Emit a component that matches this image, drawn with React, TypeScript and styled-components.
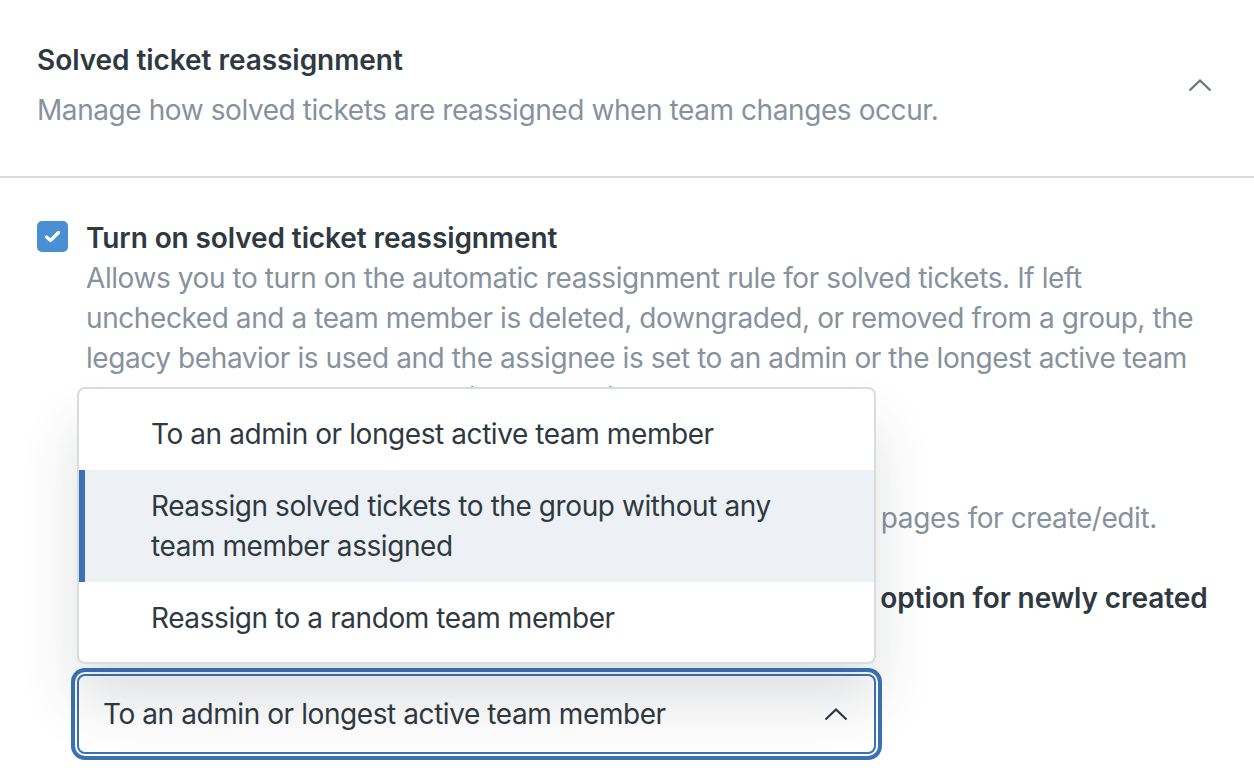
import React from "react";
import styled, { createGlobalStyle } from "styled-components";

const GlobalStyle = createGlobalStyle`
  html, body {
    margin: 0;
    padding: 0;
    background: #ffffff;
  }
  body {
    font-family: Inter, "Noto Sans", sans-serif;
    font-size: 28px;
    line-height: 40px;
    letter-spacing: -0.42px;
    color: #2f3941;
    -webkit-font-smoothing: antialiased;
  }
  * {
    box-sizing: border-box;
  }
`;

const Page = styled.div`
  width: 1254px;
  height: 782px;
  overflow: hidden;
`;

const Header = styled.div`
  display: flex;
  align-items: center;
  justify-content: space-between;
  padding: 40px 42px 46px 37px;
  border-bottom: 2px solid #d8dcde;
`;

const HeaderText = styled.div`
  display: flex;
  flex-direction: column;
  gap: 10px;
`;

const Title = styled.h2`
  margin: 0;
  font-size: 28px;
  line-height: 40px;
  font-weight: 600;
  letter-spacing: -0.05px;
  color: #2f3941;
`;

const Subtitle = styled.p`
  margin: 0;
  color: #87929d;
`;

const Chevron = styled.svg<{ tone: string }>`
  width: 24px;
  height: 14px;
  flex: none;
  color: ${(p) => p.tone};
`;

const Body = styled.div`
  padding: 40px 40px 0 37px;
  display: flex;
  flex-direction: column;
`;

const CheckRow = styled.div`
  display: flex;
  align-items: flex-start;
  gap: 18px;
`;

const Box = styled.span`
  width: 31px;
  height: 31px;
  margin-top: 3px;
  flex: none;
  border-radius: 5px;
  background: #4a8fd4;
  display: flex;
  align-items: center;
  justify-content: center;
`;

const CheckText = styled.div`
  display: flex;
  flex-direction: column;
`;

const Label = styled.div`
  font-weight: 600;
  letter-spacing: -0.1px;
  color: #2f3941;
`;

const Hint = styled.div`
  color: #87929d;
`;

const Link = styled.a`
  color: #1f73b7;
  text-decoration: none;
  svg {
    margin-left: 6px;
    vertical-align: -2px;
  }
`;

const Field = styled.div<{ top: number }>`
  margin: ${(p) => p.top}px 0 0 48px;
  display: flex;
  flex-direction: column;
`;

const SelectWrap = styled.div`
  position: relative;
  margin: 16px 0 0 40px;
  width: 799px;
`;

const Menu = styled.ul`
  position: absolute;
  left: 0;
  right: 0;
  bottom: calc(100% + 10px);
  z-index: 10;
  margin: 0;
  padding: 9px 0 8px;
  list-style: none;
  background: #ffffff;
  border: 2px solid #d8dcde;
  border-radius: 8px;
  box-shadow: 0 40px 56px 0 rgba(47, 57, 65, 0.15);
`;

const Item = styled.li<{ active?: boolean }>`
  padding: 16px 40px 16px 72px;
  color: #2f3941;
  background: ${(p) => (p.active ? "#edf1f6" : "transparent")};
  box-shadow: ${(p) => (p.active ? "inset 6px 0 0 #3a72b5" : "none")};
`;

const SelectBox = styled.div`
  display: flex;
  align-items: center;
  justify-content: space-between;
  height: 80px;
  padding: 0 26px 0 24px;
  border: 2px solid #3a72b5;
  border-radius: 8px;
  background: #ffffff;
  box-shadow: 0 0 0 2px #ffffff, 0 0 0 6px #3a72b5;
  color: #2f3941;
`;

const ChevronUp = ({ tone }: { tone: string }) => (
  <Chevron tone={tone} viewBox="0 0 24 14">
    <polyline points="1.5,12.5 12,2.5 22.5,12.5" fill="none" stroke="currentColor" strokeWidth="2.2" />
  </Chevron>
);

const App = () => {
  return (
    <>
      <GlobalStyle />
      <Page>
        <Header>
          <HeaderText>
            <Title>Solved ticket reassignment</Title>
            <Subtitle>Manage how solved tickets are reassigned when team changes occur.</Subtitle>
          </HeaderText>
          <ChevronUp tone="#68737d" />
        </Header>
        <Body>
          <CheckRow>
            <Box>
              <svg width="17" height="13" viewBox="0 0 17 13">
                <polyline points="2.5,7 6.5,10.5 14.5,2.5" fill="none" stroke="#ffffff" strokeWidth="3.2" strokeLinecap="round" strokeLinejoin="round" />
              </svg>
            </Box>
            <CheckText>
              <Label>Turn on solved ticket reassignment</Label>
              <Hint>
                Allows you to turn on the automatic reassignment rule for solved tickets. If left
                unchecked and a team member is deleted, downgraded, or removed from a group, the
                legacy behavior is used and the assignee is set to an admin or the longest active team
                member.{" "}
                <Link href="#">
                  Learn about solved ticket reassignment
                  <svg width="18" height="18" viewBox="0 0 18 18">
                    <path d="M7 3H3v12h12v-4M10 3h5v5M15 3l-7 7" fill="none" stroke="currentColor" strokeWidth="2" />
                  </svg>
                </Link>
              </Hint>
            </CheckText>
          </CheckRow>
          <Field top={40}>
            <Label>Reassignment rule</Label>
            <Hint>Choose the rule that applies to solved tickets. It's displayed in pages for create/edit.</Hint>
          </Field>
          <Field top={40}>
            <Label>Choose the solved ticket reassignment rule as your default option for newly created groups</Label>
          </Field>
          <SelectWrap>
            <Menu>
              <Item>To an admin or longest active team member</Item>
              <Item active>
                Reassign solved tickets to the group without any
                <br />
                team member assigned
              </Item>
              <Item>Reassign to a random team member</Item>
            </Menu>
            <SelectBox>
              <span>To an admin or longest active team member</span>
              <ChevronUp tone="#2f3941" />
            </SelectBox>
          </SelectWrap>
        </Body>
      </Page>
    </>
  );
};

export default App;
